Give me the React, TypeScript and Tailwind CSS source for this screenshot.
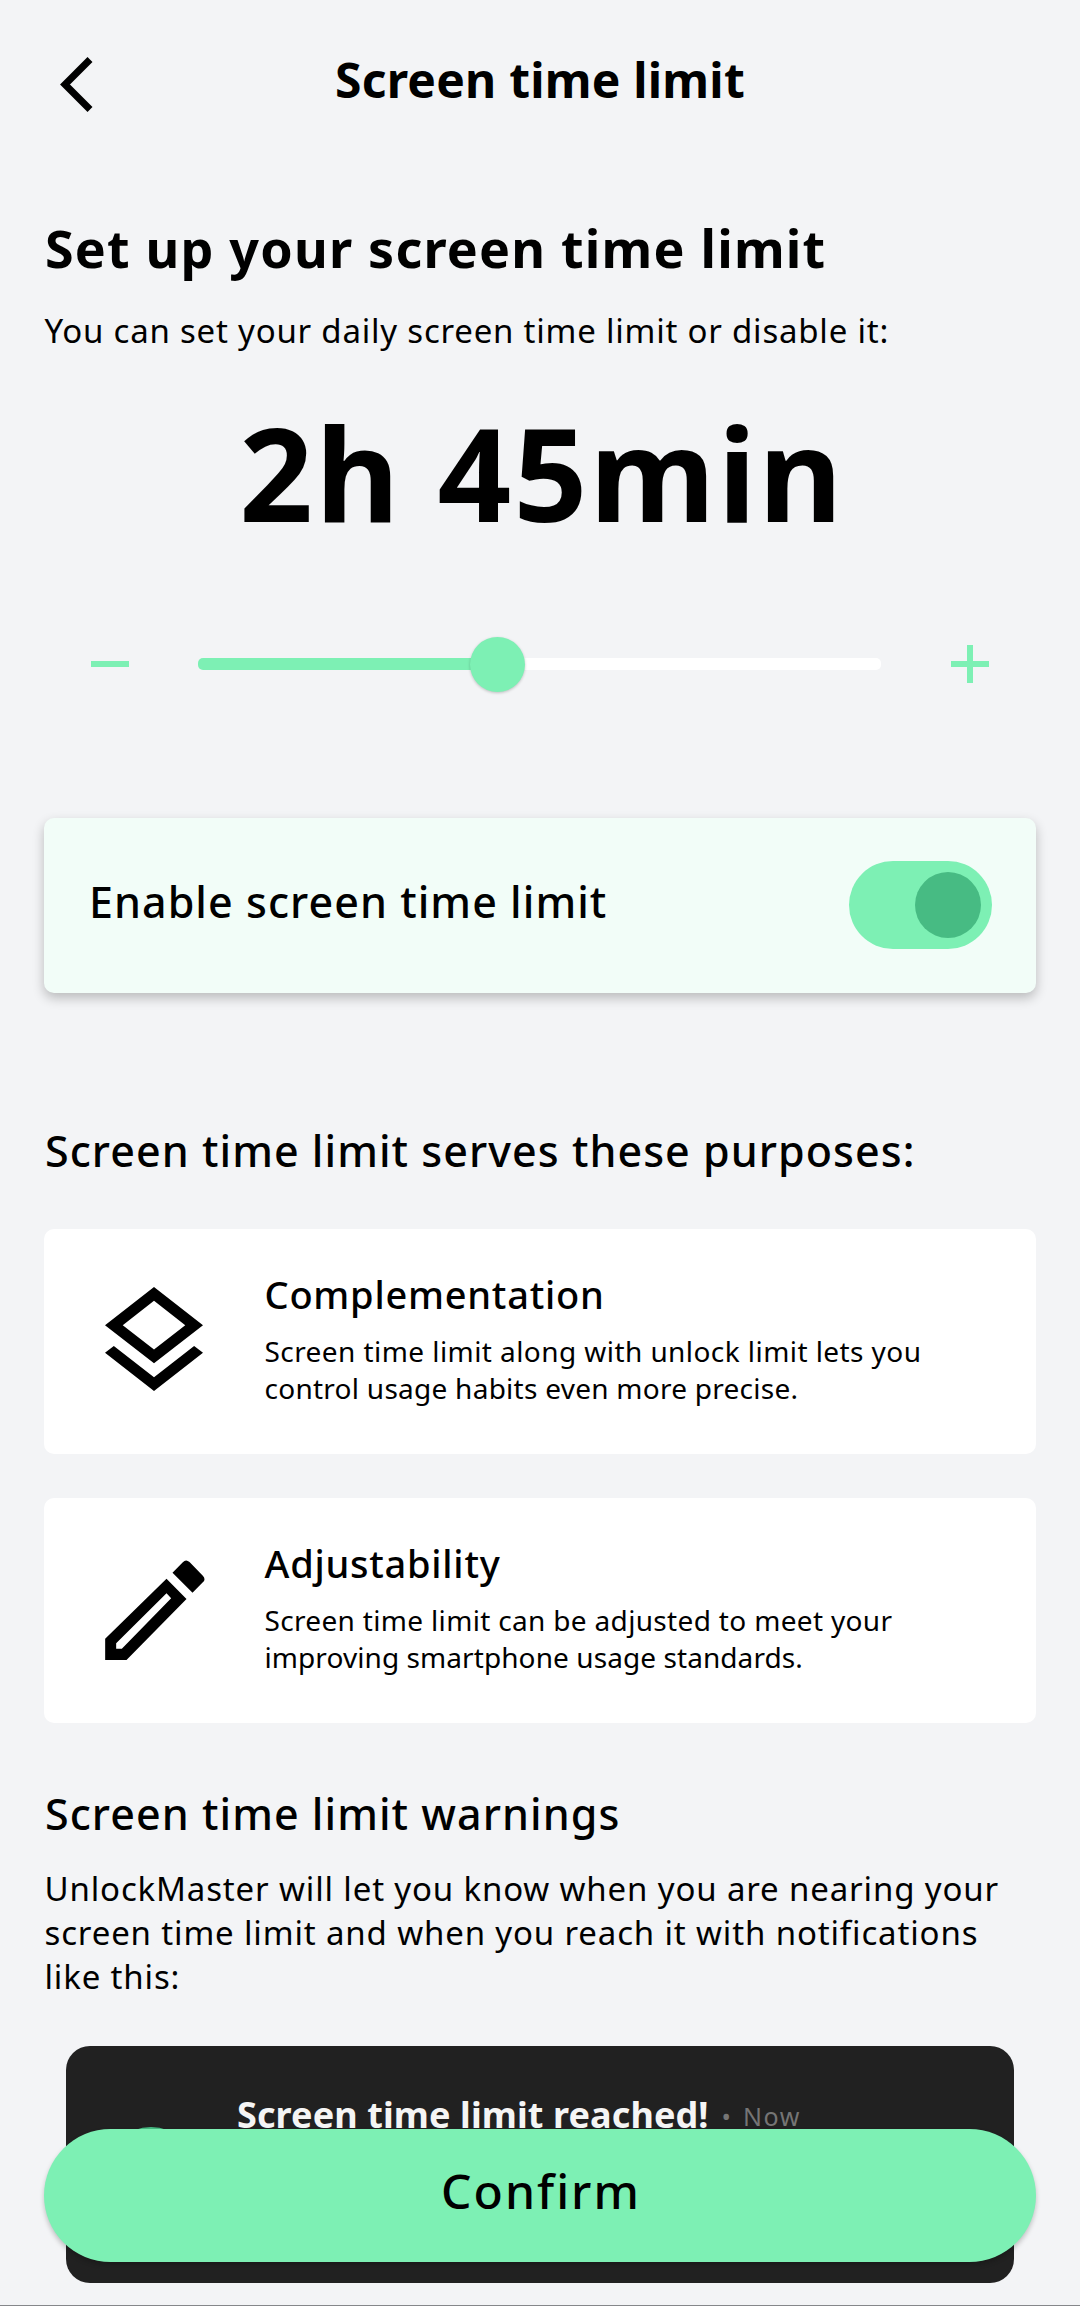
import type { ReactNode } from "react";

function LayersIcon() {
  return (
    <svg className="mt-[58px] h-[104px] w-[98px]" viewBox="3 2 18 19.07" preserveAspectRatio="none">
      <path d="M12 18.54L19.37 12.8L21 14.07L12 21.07L3 14.07L4.62 12.81L12 18.54M12 16L3 9L12 2L21 9L12 16M12 4.53L6.26 9L12 13.47L17.74 9L12 4.53Z" />
    </svg>
  );
}

function PencilIcon() {
  return (
    <svg className="mt-[62px] h-[100px] w-[100px]" viewBox="73 91 299 300">
      <path
        fillRule="evenodd"
        d="M257 147L317 208L137 391H73V327ZM257 191L106 341V357H123L271 206Z"
      />
      <path d="M275 129L306 98Q315 87 326 97L366 138Q376 149 366 158L335 189Z" />
    </svg>
  );
}

function PurposeCard({ icon, title, children }: { icon: ReactNode; title: ReactNode; children: ReactNode }) {
  return (
    <div className="flex h-[225px] rounded-[10px] bg-white">
      <div className="w-[220.5px] shrink-0 pl-[60.5px]">{icon}</div>
      <div className="pt-10">
        <h3 className="text-[38px]/[50px] font-medium">{title}</h3>
        <p className="mt-[14px] text-[28px]/[37.4px] whitespace-nowrap">{children}</p>
      </div>
    </div>
  );
}

export default function App() {
  return (
    <div className="relative flex h-[2306px] w-[1080px] flex-col overflow-hidden border-b border-[#85878a] bg-[#f3f4f6] px-[44px] font-['Noto_Sans',sans-serif] text-black">
      <header className="grid h-[128px] grid-cols-[100px_1fr_100px] pt-[47px]">
        <button className="flex items-start pt-[10px] pl-4" aria-label="Back">
          <svg className="h-[55px] w-[33px]" viewBox="0 0 33 55">
            <path d="M30 2.5L5 27.5L30 52.5" fill="none" stroke="black" strokeWidth="7" />
          </svg>
        </button>
        <h1 className="pt-px text-center text-[48px]/[64px] font-bold tracking-[0.2px]">Screen time limit</h1>
      </header>

      <h2 className="mt-[84px] ml-px text-[52px]/[72px] font-bold tracking-[1.2px]">Set up your screen time limit</h2>
      <p className="mt-[25px] ml-[0.5px] text-[33px]/[44px] tracking-[0.78px]">
        You can set your daily screen time limit or disable it:
      </p>

      <div className="mt-[38.5px] pl-1 text-center text-[129px]/[160px] font-bold tracking-[2.3px]">2h 45min</div>

      <div className="mt-[84.5px] flex h-14 items-center">
        <div className="ml-[47px] h-[6px] w-[38px] bg-[#7df0b4]" />
        <div className="ml-[69px] flex h-14 w-[683px] items-center">
          <div className="h-3 w-[275px] rounded-l-[5px] bg-[#7df0b4]" />
          <div className="z-10 -ml-[3px] size-[55px] shrink-0 rounded-full bg-[#7df0b4] shadow-[0_1px_3px_rgba(0,0,0,0.22)]" />
          <div className="-ml-[3px] h-3 flex-1 rounded-r-[5px] bg-white" />
        </div>
        <svg className="ml-[70px] size-[38px]" viewBox="0 0 38 38">
          <path d="M0 19H38M19 0V38" stroke="#7df0b4" strokeWidth="6" />
        </svg>
      </div>

      <div className="mt-[125.5px] flex h-[175.5px] shrink-0 items-center justify-between rounded-[10px] bg-[#f2fdf8] pr-11 pl-[45px] shadow-[0_5px_12px_rgba(0,0,0,0.24)]">
        <span className="mb-[7px] text-[43px]/[56px] font-medium tracking-[1.05px]">Enable screen time limit</span>
        <div className="flex h-[88px] w-[143px] items-center justify-end rounded-full bg-[#7df0b4] pr-[11px]">
          <div className="size-[66px] rounded-full bg-[#47bb83]" />
        </div>
      </div>

      <h2 className="mt-[130px] ml-px text-[43px]/[56px] font-medium tracking-[1.05px]">
        Screen time limit serves these purposes:
      </h2>
      <div className="mt-[49.5px] flex flex-col gap-[44px]">
        <PurposeCard icon={<LayersIcon />} title={<span className="tracking-[0.75px]">Complementation</span>}>
          <span className="tracking-[0.43px]">Screen time limit along with unlock limit lets you</span>
          <br />
          <span className="tracking-[0.26px]">control usage habits even more precise.</span>
        </PurposeCard>
        <PurposeCard icon={<PencilIcon />} title={<span className="tracking-[0.75px]">Adjustability</span>}>
          <span className="tracking-[0.33px]">Screen time limit can be adjusted to meet your</span>
          <br />
          <span className="tracking-[0.08px]">improving smartphone usage standards.</span>
        </PurposeCard>
      </div>

      <h2 className="mt-[63px] ml-px text-[43px]/[56px] font-medium tracking-[1.05px]">Screen time limit warnings</h2>
      <p className="mt-[25px] ml-[0.5px] text-[33px]/[44px] tracking-[0.85px] whitespace-nowrap">
        UnlockMaster will let you know when you are nearing your
        <br />
        screen time limit and when you reach it with notifications
        <br />
        like this:
      </p>

      <div className="mx-[22px] mt-[47px] flex h-[237px] shrink-0 overflow-hidden rounded-[24px] bg-[#212121]">
        <div className="mt-[81px] ml-[41px] size-[88px] shrink-0 rounded-full bg-[#47bb83]" />
        <div className="mt-[45px] ml-[42px] flex h-[48px] items-baseline whitespace-nowrap">
          <span className="text-[36px]/[48px] font-bold tracking-[0.1px] text-[#f5f5f5]">Screen time limit reached!</span>
          <span className="relative -top-[2px] ml-[13px] text-[25px]/[48px] text-[#757575]">•</span>
          <span className="relative -top-[2px] ml-[12px] text-[25px]/[48px] tracking-[1.5px] text-[#757575]">Now</span>
        </div>
      </div>

      <button className="absolute inset-x-[44px] top-[2129px] h-[132.5px] rounded-full bg-[#7df0b4] pb-[8px] pl-[2px] text-[48px]/[64px] font-medium tracking-[2px] shadow-[0_3px_5px_rgba(0,0,0,0.22)]">
        Confirm
      </button>
    </div>
  );
}
